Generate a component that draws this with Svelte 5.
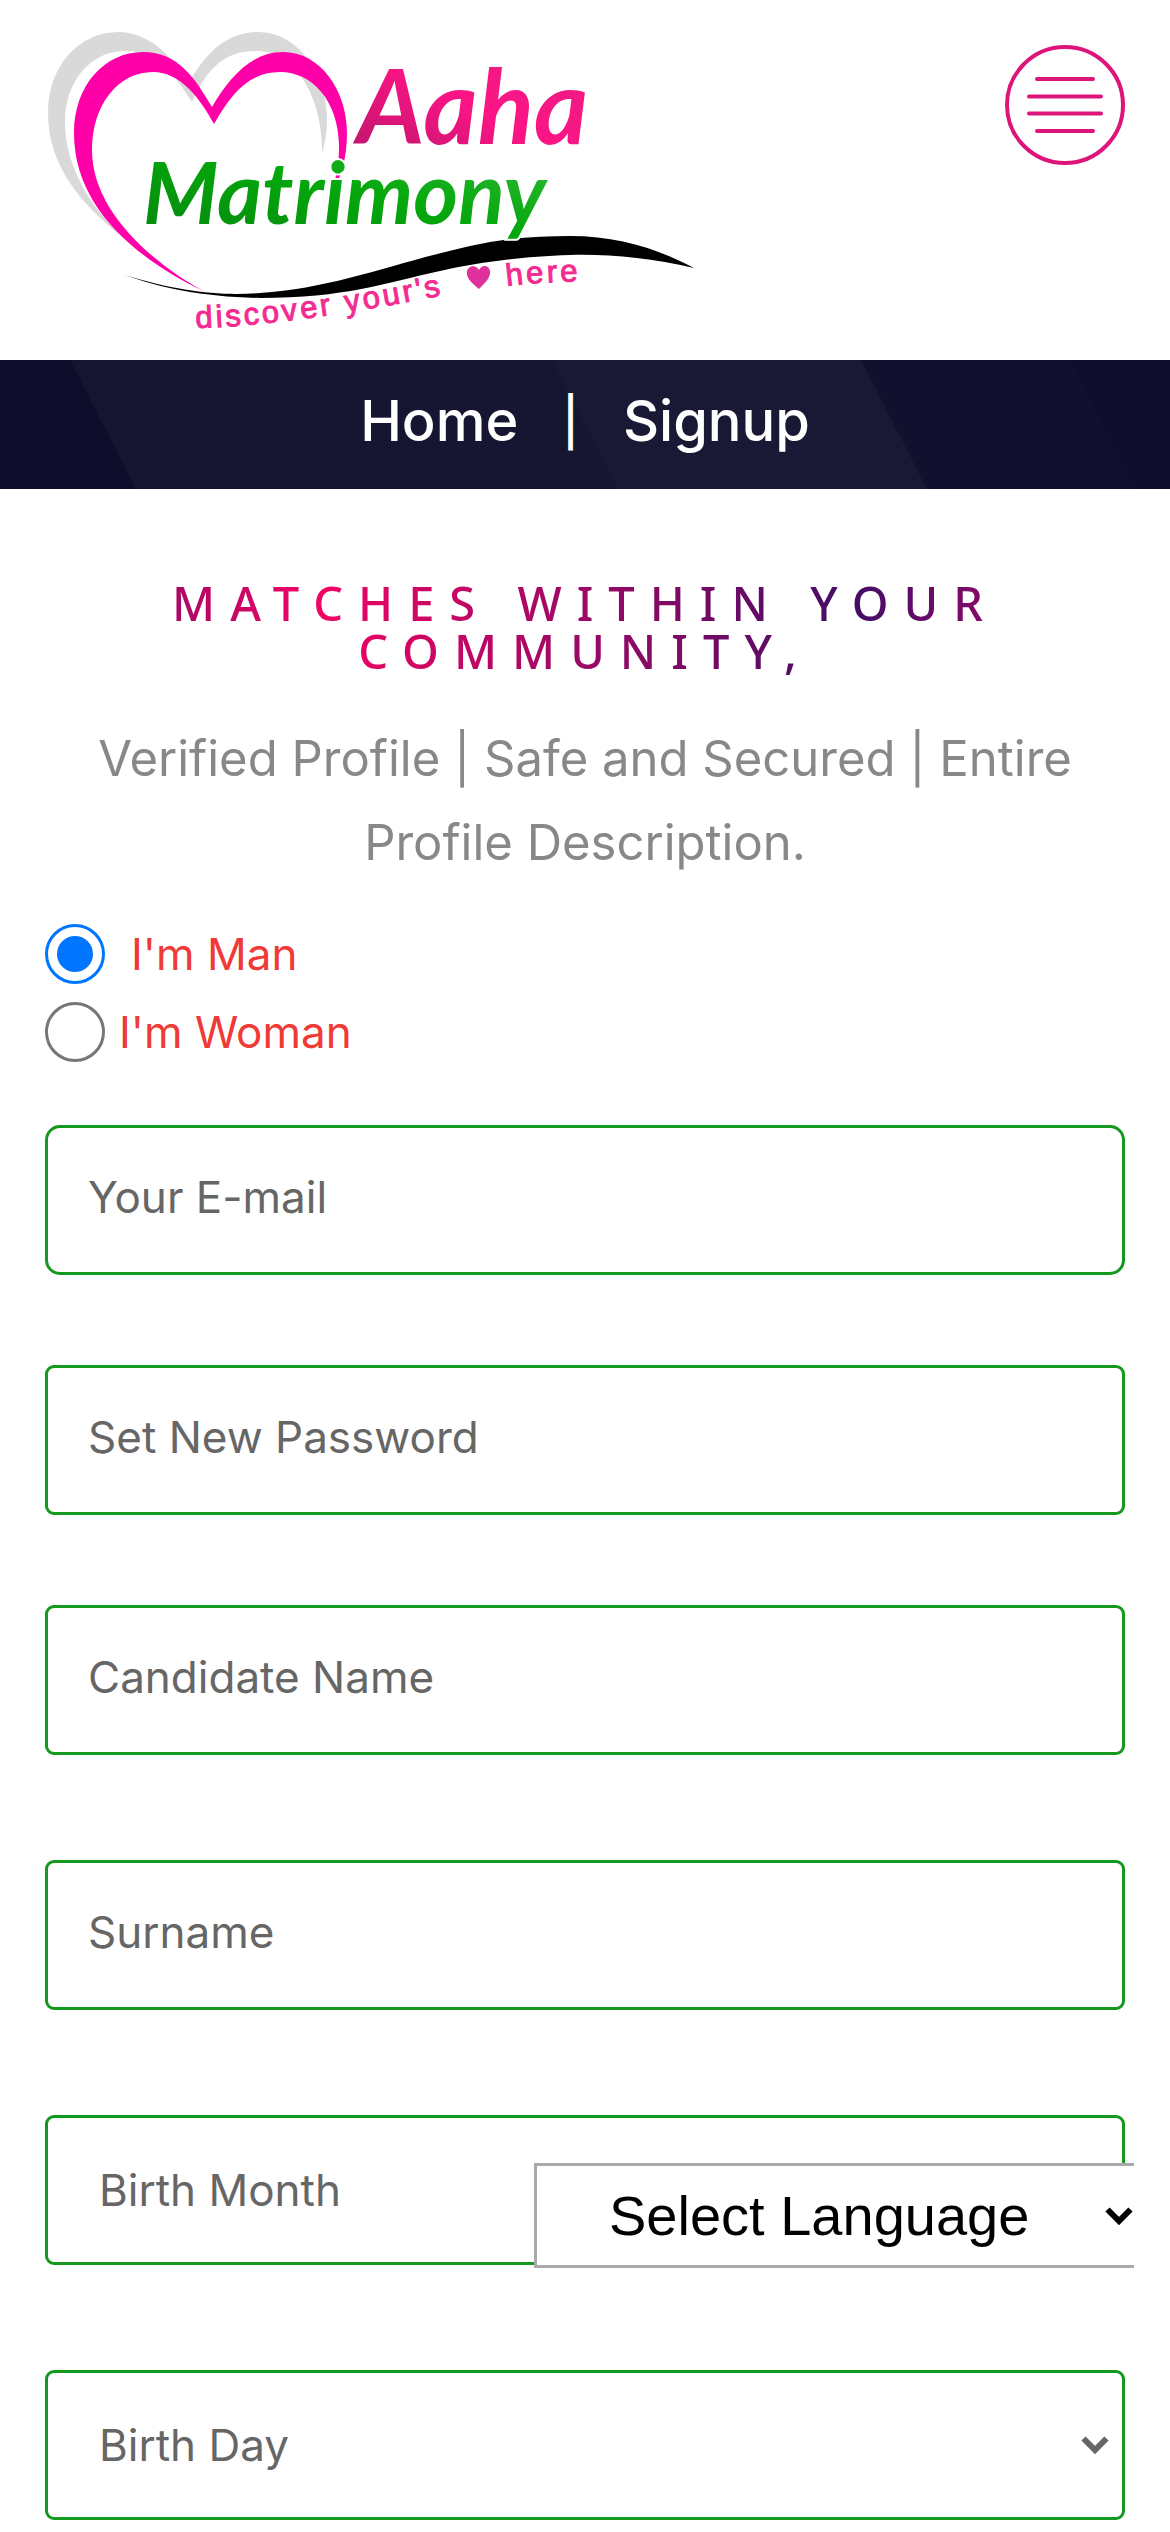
<script>
  let gender = $state("man");
  let language = $state("");

  const textFields = [
    { id: "email", type: "email", label: "Your E-mail" },
    { id: "password", type: "password", label: "Set New Password" },
    { id: "candidate", type: "text", label: "Candidate Name" },
    { id: "surname", type: "text", label: "Surname" },
  ];

  const months = ["January", "February", "March", "April", "May", "June", "July",
    "August", "September", "October", "November", "December"];
  const days = Array.from({ length: 31 }, (_, i) => i + 1);

  const birthFields = [
    { id: "month", label: "Birth Month", options: months },
    { id: "day", label: "Birth Day", options: days },
  ];
</script>

{#snippet chevron()}
  <svg class="chevron" viewBox="0 0 28 18" aria-hidden="true">
    <path d="M2.5 2.5 14 14 25.5 2.5" fill="none" stroke="currentColor" stroke-width="6" />
  </svg>
{/snippet}

<header class="header">
  <a href="#home" class="logo" aria-label="Aaha Matrimony">
    <svg viewBox="0 0 675 360">
      <defs>
        <linearGradient id="pink" x1="0" y1="1" x2="1" y2="0">
          <stop offset="0" stop-color="#b5176a" />
          <stop offset="0.5" stop-color="#fb1485" />
          <stop offset="1" stop-color="#e91e82" />
        </linearGradient>
        <linearGradient id="green" x1="0" y1="1" x2="1" y2="0">
          <stop offset="0" stop-color="#07860f" />
          <stop offset="0.5" stop-color="#04a70c" />
          <stop offset="1" stop-color="#34bd3c" />
        </linearGradient>
        <path id="tag-left" d="M151 328C220 326 300 315 425 290" />
        <path id="tag-right" d="M462 286Q500 281 560 281" />
      </defs>
      <path
        fill="#d9d9d9"
        d="M85 243C35 205 3 165 3 113C3 65 35 32 73 32C105 32 128 58 144 82C162 52 182 32 213 32C255 32 282 78 282 117C282 132 280 144 277 153C278 100 252 50 210 51C180 51 162 68 147 102C125 68 112 51 80 51C45 51 20 82 20 122C20 170 50 214 85 243Z"
      />
      <path
        fill="#ff00a8"
        d="M162 293C95 261 29 210 29 133C29 85 60 52 98 52C134 52 151 80 167 107C183 80 205 52 238 52C275 52 302 90 302 133C302 160 295 180 287 192C293 170 294 160 294 145C293 100 267 72 235 72C205 72 187 92 169 124C155 98 135 72 108 72C73 72 47 105 47 150C47 210 105 262 162 293Z"
      />
      <path
        d="M80 275C135 292 175 296 215 293C290 288 345 264 425 246C460 238 495 236 525 236C575 236 615 250 649 268C605 258 565 254 525 255C470 257 430 263 395 271C340 283 300 298 215 298C160 297 115 288 80 275Z"
      />
      <text class="script" x="312" y="144" font-size="104" fill="url(#pink)">Aaha</text>
      <text class="script outlined" x="98" y="224" font-size="86" fill="url(#green)">Matrimony</text>
      <text class="tagline"><textPath href="#tag-left">discover your's</textPath></text>
      <path fill="#e0309c" d="M434 289C425 282 421 277 422 271C424 265 431 265 434 270C437 264 444 265 445 271C446 277 441 282 434 289Z" />
      <text class="tagline"><textPath href="#tag-right">here</textPath></text>
    </svg>
  </a>
  <button class="menu" aria-label="Menu">
    <svg viewBox="0 0 120 120" fill="none" stroke="#dd157b" stroke-width="4" stroke-linecap="round">
      <circle cx="60" cy="60" r="58" />
      <path d="M32 34h56M24 51.5h72M24 68.5h72M32 86h56" />
    </svg>
  </button>
</header>

<nav class="nav">
  <a href="#home">Home</a>
  <span class="divider">|</span>
  <a href="#signup">Signup</a>
</nav>

<main class="content">
  <h1>Matches within your community,</h1>
  <p class="subtitle">Verified Profile | Safe and Secured | Entire Profile Description.</p>

  <form>
    <div class="genders">
      <label class="gender first">
        <input type="radio" name="gender" value="man" bind:group={gender} />
        I'm Man
      </label>
      <label class="gender">
        <input type="radio" name="gender" value="woman" bind:group={gender} />
        I'm Woman
      </label>
    </div>

    <div class="fields">
      {#each textFields as field}
        <input
          class="field {field.id}"
          id={field.id}
          type={field.type}
          placeholder={field.label}
          aria-label={field.label}
        />
      {/each}
      {#each birthFields as field}
        <div class="select-wrap">
          <select class="field" id={field.id} aria-label={field.label}>
            <option value="">{field.label}</option>
            {#each field.options as option}
              <option>{option}</option>
            {/each}
          </select>
          {@render chevron()}
        </div>
      {/each}
    </div>
  </form>
</main>

<div class="language">
  <select bind:value={language} aria-label="Select Language">
    <option value="">Select Language</option>
    <option value="en">English</option>
    <option value="hi">Hindi</option>
    <option value="ta">Tamil</option>
  </select>
  {@render chevron()}
</div>

<style>
  :global(body) {
    margin: 0;
    background: #fff;
    font-family: Inter, sans-serif;
  }

  .header {
    display: flex;
    justify-content: space-between;
    align-items: flex-start;
    padding: 0 45px;
  }

  .logo {
    width: 675px;
  }

  .logo svg,
  .menu svg {
    display: block;
    width: 100%;
  }

  .script {
    font-family: Lato, sans-serif;
    font-weight: bold;
    font-style: italic;
  }

  .outlined {
    stroke: #fff;
    stroke-width: 4px;
    paint-order: stroke;
  }

  .tagline {
    font-family: "Liberation Sans", sans-serif;
    font-size: 31px;
    letter-spacing: 3px;
    fill: #f32b91;
    stroke: #f32b91;
  }

  .menu {
    width: 120px;
    margin-top: 45px;
    padding: 0;
    border: 0;
    background: none;
    cursor: pointer;
  }

  .nav {
    display: flex;
    justify-content: center;
    gap: 44px;
    padding: 24px 0 30px;
    background: linear-gradient(63deg, #0e0e2c 11%, #151532 11%, #161633 50%, #191935 50%, #191935 75%, #11112f 75%, #10102e 92%, #0e0e2c 92%);
    color: #fff;
    font-size: 56px;
    line-height: 75px;
    font-weight: 500;
  }

  .nav a {
    color: inherit;
    text-decoration: none;
  }

  .divider {
    font-size: 48px;
  }

  .content {
    padding: 90px 45px 12px;
  }

  h1 {
    margin: 0;
    font-family: "Noto Sans", sans-serif;
    font-size: 47px;
    line-height: 48px;
    font-weight: 500;
    letter-spacing: 15px;
    text-align: center;
    text-transform: uppercase;
    color: transparent;
    background: linear-gradient(90deg, #6a0b68 0%, #f20464 25%, #430d66 75%, #c90666 100%);
    -webkit-background-clip: text;
    background-clip: text;
  }

  .subtitle {
    margin: 42px 0 0;
    color: #888;
    font-size: 49px;
    line-height: 84px;
    text-align: center;
  }

  .genders {
    display: flex;
    flex-direction: column;
    gap: 18px;
    margin-top: 39px;
  }

  .gender {
    display: flex;
    align-items: center;
    gap: 14px;
    color: #f03a37;
    font-size: 44px;
    line-height: 60px;
  }

  .gender.first {
    gap: 26px;
  }

  .gender input {
    appearance: none;
    box-sizing: border-box;
    width: 60px;
    height: 60px;
    margin: 0;
    border: 3px solid #767676;
    border-radius: 50%;
  }

  .gender input:checked {
    border-color: #0075ff;
    background: #0075ff content-box;
    padding: 9px;
  }

  .fields {
    display: flex;
    flex-direction: column;
    gap: 105px;
    margin-top: 63px;
  }

  .field {
    box-sizing: border-box;
    width: 100%;
    height: 150px;
    padding: 0 40px 6px;
    border: 3px solid #14981d;
    border-radius: 9px;
    background: #fff;
    color: #666;
    font-family: inherit;
    font-size: 44px;
  }

  .field::placeholder {
    color: #666;
    opacity: 1;
  }

  .email {
    border-radius: 15px;
  }

  .email,
  .password {
    margin-bottom: -15px;
  }

  .select-wrap {
    display: grid;
    align-items: center;
    color: #666;
  }

  .select-wrap > :global(*) {
    grid-area: 1 / 1;
  }

  select {
    appearance: none;
  }

  select.field {
    padding: 0 51px;
  }

  .chevron {
    justify-self: end;
    width: 28px;
    margin-right: 16px;
    pointer-events: none;
  }

  .language {
    position: fixed;
    right: 36px;
    bottom: 264px;
    display: flex;
    align-items: center;
    box-sizing: border-box;
    width: 600px;
    height: 105px;
    border: 3px solid #a9a9a9;
    border-right: 0;
    background: #fff;
    color: #000;
  }

  .language select {
    flex: 1;
    height: 100%;
    padding: 0 0 0 72px;
    border: 0;
    background: none;
    color: inherit;
    font-family: "Liberation Sans", sans-serif;
    font-size: 56px;
  }

  .language .chevron {
    margin-right: 1px;
  }
</style>
